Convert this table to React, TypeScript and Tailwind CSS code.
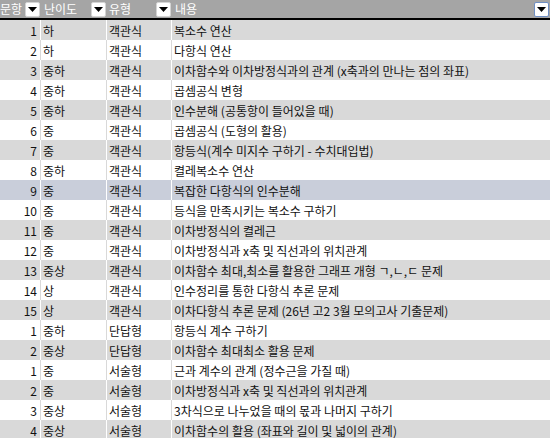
const rows: [string, string, string, string][] = [
  ["1", "하", "객관식", "복소수 연산"],
  ["2", "하", "객관식", "다항식 연산"],
  ["3", "중하", "객관식", "이차함수와 이차방정식과의 관계 (x축과의 만나는 점의 좌표)"],
  ["4", "중하", "객관식", "곱셈공식 변형"],
  ["5", "중하", "객관식", "인수분해 (공통항이 들어있을 때)"],
  ["6", "중", "객관식", "곱셈공식 (도형의 활용)"],
  ["7", "중", "객관식", "항등식(계수 미지수 구하기 - 수치대입법)"],
  ["8", "중하", "객관식", "켤레복소수 연산"],
  ["9", "중", "객관식", "복잡한 다항식의 인수분해"],
  ["10", "중", "객관식", "등식을 만족시키는 복소수 구하기"],
  ["11", "중", "객관식", "이차방정식의 켤레근"],
  ["12", "중", "객관식", "이차방정식과 x축 및 직선과의 위치관계"],
  ["13", "중상", "객관식", "이차함수 최대,최소를 활용한 그래프 개형 ㄱ,ㄴ,ㄷ 문제"],
  ["14", "상", "객관식", "인수정리를 통한 다항식 추론 문제"],
  ["15", "상", "객관식", "이차다항식 추론 문제 (26년 고2 3월 모의고사 기출문제)"],
  ["1", "중하", "단답형", "항등식 계수 구하기"],
  ["2", "중상", "단답형", "이차함수 최대최소 활용 문제"],
  ["1", "중", "서술형", "근과 계수의 관계 (정수근을 가질 때)"],
  ["2", "중", "서술형", "이차방정식과 x축 및 직선과의 위치관계"],
  ["3", "중상", "서술형", "3차식으로 나누었을 때의 몫과 나머지 구하기"],
  ["4", "중상", "서술형", "이차함수의 활용 (좌표와 길이 및 넓이의 관계)"],
];

function FilterButton({ active }: { active?: boolean }) {
  return (
    <div
      className={
        "absolute right-[1px] top-[2px] flex h-[15px] w-[15px] items-center justify-center rounded-[2px] border bg-white " +
        (active ? "border-[#6f8fc4]" : "border-[#d4d4d4]")
      }
    >
      <svg width="9" height="5" viewBox="0 0 9 5">
        <path d="M0 0h9L4.5 5z" fill="#000" />
      </svg>
    </div>
  );
}

export default function App() {
  return (
    <div
      className="h-[438px] w-[550px] overflow-hidden bg-white text-[12px] text-[#111]"
      style={{ fontFamily: '"Noto Sans CJK KR", "Noto Sans", sans-serif' }}
    >
      {/* header */}
      <div className="grid h-[18px] grid-cols-[41px_66px_65px_1fr] bg-[#a5a5a5] leading-[18px] text-white">
        <div className="relative overflow-hidden">문항<FilterButton /></div>
        <div className="relative pl-[3px]">난이도<FilterButton /></div>
        <div className="relative pl-[2px]">유형<FilterButton /></div>
        <div className="relative pl-[3px]">내용<FilterButton active /></div>
      </div>
      <div className="h-[2px] bg-black" />

      {rows.map((r, i) => {
        const selected = i === 8;
        const gray = i % 2 === 0;
        const bg = selected ? "bg-[#c9ceda]" : gray ? "bg-[#d9d9d9]" : "bg-white";
        const line = gray ? "border-white" : "border-[#d9d9d9]";
        return (
          <div
            key={i}
            className={"grid h-[20px] grid-cols-[41px_66px_65px_1fr] leading-[21px] " + bg}
          >
            <div className={"border-r pr-[3px] text-right " + line}>{r[0]}</div>
            <div className={"border-r pl-[2px] " + line}>{r[1]}</div>
            <div className={"border-r pl-[2px] " + line}>{r[2]}</div>
            <div className="whitespace-nowrap pl-[2px]">{r[3]}</div>
          </div>
        );
      })}
    </div>
  );
}
